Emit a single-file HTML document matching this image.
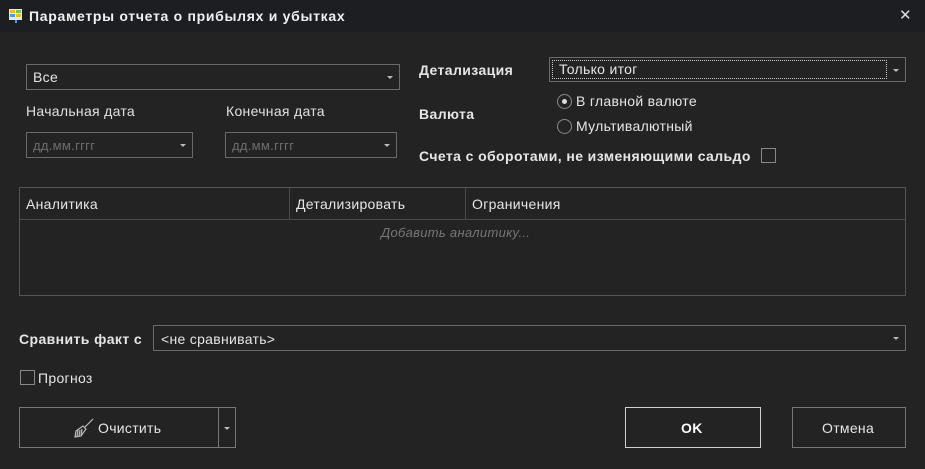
<!DOCTYPE html>
<html><head><meta charset="utf-8"><style>
*{box-sizing:border-box;margin:0;padding:0}
body{width:925px;height:469px;background:#232323;font-family:"Liberation Sans","DejaVu Sans",sans-serif;font-size:14px;color:#e6e6e6;position:relative;overflow:hidden;letter-spacing:0.3px}
.a{position:absolute}
.tb{left:0;top:0;width:925px;height:32px;background:#1d1e21}
.box{position:absolute;border:1px solid #6a6a6a;background:#232323}
.arr{position:absolute;right:6px;top:50%;margin-top:-1px;width:0;height:0;border-left:3px solid transparent;border-right:3px solid transparent;border-top:3px solid #bbb}
.b{font-weight:bold;letter-spacing:0.4px}
.lbl{color:#e0e0e0}
</style></head><body>
<div class="a tb"></div>
<svg class="a" style="left:8px;top:8px" width="16" height="16" viewBox="0 0 16 16"><rect x="1" y="1" width="13" height="11" fill="#e8e8e8"/><rect x="2" y="2" width="5" height="3" fill="#e9b93a"/><rect x="8" y="2" width="5" height="3" fill="#7cc24a"/><rect x="2" y="6" width="5" height="3" fill="#4a9ee0"/><rect x="8" y="6" width="5" height="3" fill="#e9b93a"/><rect x="7" y="12" width="2" height="3" fill="#4a9ee0"/></svg>
<div class="a b" style="left:29px;top:8px;font-size:14px;color:#f0f0f0;letter-spacing:0.7px">Параметры отчета о прибылях и убытках</div>
<div class="a" style="left:899px;top:6px;font-size:15px;color:#ddd">✕</div>

<div class="box" style="left:26px;top:64px;width:374px;height:26px"><span class="a" style="left:6px;top:4px">Все</span><div class="arr"></div></div>
<div class="a lbl" style="left:26px;top:103px">Начальная дата</div>
<div class="a lbl" style="left:226px;top:103px">Конечная дата</div>
<div class="box" style="left:26px;top:132px;width:167px;height:26px"><span class="a" style="left:6px;top:5px;font-size:13px;color:#6e6e6e">дд.мм.гггг</span><div class="arr"></div></div>
<div class="box" style="left:225px;top:132px;width:172px;height:26px"><span class="a" style="left:6px;top:5px;font-size:13px;color:#6e6e6e">дд.мм.гггг</span><div class="arr"></div></div>

<div class="a b" style="left:419px;top:62px">Детализация</div>
<div class="box" style="left:549px;top:57px;width:357px;height:25px"><div class="a" style="left:2px;top:2px;width:335px;height:19px;border:1px dotted #ccc"></div><span class="a" style="left:9px;top:3px">Только итог</span><div class="arr"></div></div>
<div class="a b" style="left:419px;top:106px">Валюта</div>
<div class="a" style="left:557px;top:94px;width:15px;height:15px;border:1px solid #888;border-radius:50%"><div class="a" style="left:4px;top:4px;width:5px;height:5px;border-radius:50%;background:#ddd"></div></div>
<div class="a" style="left:576px;top:93px">В главной валюте</div>
<div class="a" style="left:557px;top:119px;width:15px;height:15px;border:1px solid #888;border-radius:50%"></div>
<div class="a" style="left:576px;top:118px">Мультивалютный</div>
<div class="a b" style="left:419px;top:148px">Счета с оборотами, не изменяющими сальдо</div>
<div class="a" style="left:761px;top:148px;width:15px;height:15px;border:1px solid #888"></div>

<div class="box" style="left:19px;top:187px;width:887px;height:109px;border-color:#555"></div>
<div class="a" style="left:20px;top:219px;width:885px;height:1px;background:#4a4a4a"></div>
<div class="a" style="left:289px;top:188px;width:1px;height:31px;background:#4a4a4a"></div>
<div class="a" style="left:465px;top:188px;width:1px;height:31px;background:#4a4a4a"></div>
<div class="a" style="left:26px;top:196px">Аналитика</div>
<div class="a" style="left:296px;top:196px">Детализировать</div>
<div class="a" style="left:472px;top:196px">Ограничения</div>
<div class="a" style="left:381px;top:225px;font-style:italic;color:#777;font-size:13px">Добавить аналитику...</div>

<div class="a b" style="left:19px;top:331px">Сравнить факт с</div>
<div class="box" style="left:153px;top:325px;width:753px;height:26px"><span class="a" style="left:7px;top:5px">&lt;не сравнивать&gt;</span><div class="arr"></div></div>
<div class="a" style="left:20px;top:370px;width:15px;height:15px;border:1px solid #888"></div>
<div class="a" style="left:38px;top:370px">Прогноз</div>

<div class="box" style="left:19px;top:407px;width:217px;height:41px;border-color:#777"></div>
<div class="a" style="left:218px;top:408px;width:1px;height:39px;background:#777"></div>
<div class="arr" style="left:224px;top:427px;margin:0"></div>
<svg class="a" style="left:73px;top:417px" width="22" height="22" viewBox="0 0 22 22" fill="none" stroke="#bbb" stroke-width="1.2"><path d="M20 2 L12 10"/><path d="M10 9 L13 12 L8 19 L2 20 L3 14 Z"/><path d="M5 13 L4 19 M7 13 L6 19 M9 12 L8 18"/></svg>
<div class="a" style="left:98px;top:420px">Очистить</div>

<div class="box" style="left:625px;top:407px;width:136px;height:41px;border-color:#d0d0d0"></div>
<div class="a b" style="left:681px;top:420px;color:#fff">OK</div>
<div class="box" style="left:792px;top:407px;width:114px;height:41px;border-color:#777"></div>
<div class="a" style="left:822px;top:420px">Отмена</div>
</body></html>
